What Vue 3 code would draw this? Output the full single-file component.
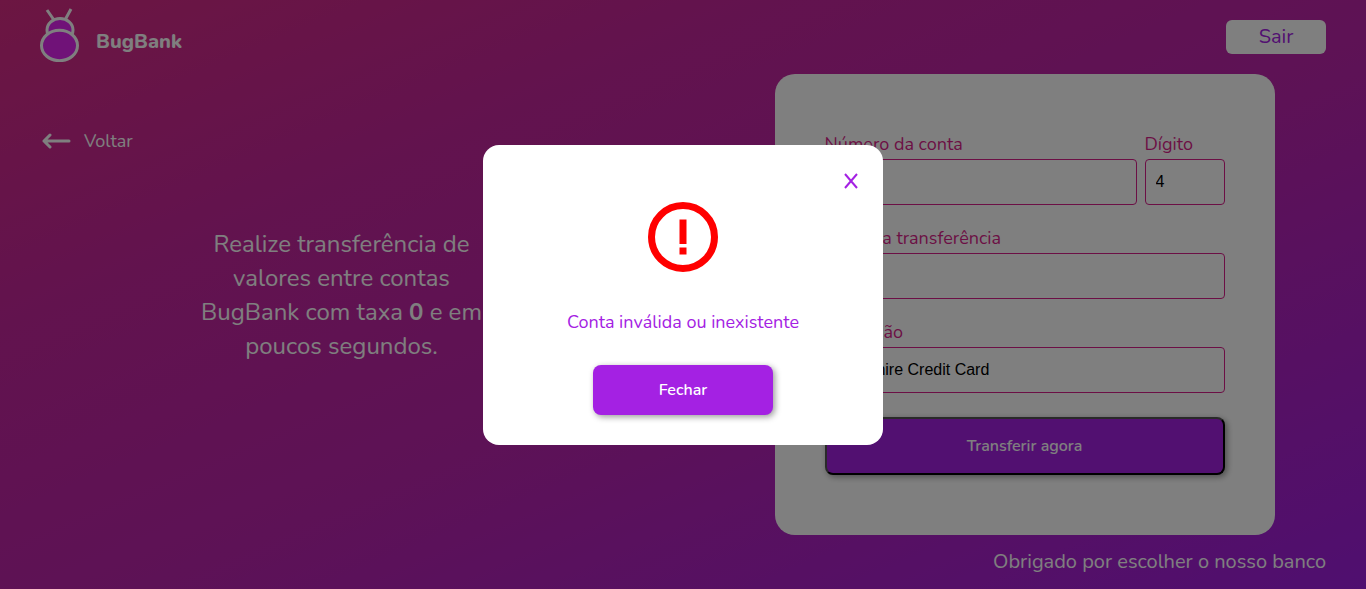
<script setup>
import { ref } from 'vue'

const account = ref('')
const digit = ref('4')
const amount = ref('')
const description = ref('Berkshire Credit Card')
</script>

<template>
  <div class="page">
    <header class="header">
      <a class="brand" href="#">
        <svg class="logo" viewBox="0 0 40 54" aria-hidden="true">
          <path d="M7 2 L14 12 M31 1 L25 12" fill="none" stroke="#fff" stroke-width="3" />
          <ellipse cx="20" cy="22" rx="13" ry="11.5" fill="#e024f0" stroke="#fff" stroke-width="3" />
          <ellipse cx="19.5" cy="37.5" rx="18" ry="15.2" fill="#e024f0" stroke="#fff" stroke-width="3" />
        </svg>
        <span>BugBank</span>
      </a>
      <button class="exit" type="button">Sair</button>
    </header>

    <main class="content">
      <section class="intro">
        <a class="back" href="#">
          <svg class="arrow" viewBox="0 0 30 16" aria-hidden="true">
            <path d="M8 2 L2 8 L8 14 M2 8 H27" />
          </svg>
          <span>Voltar</span>
        </a>
        <p class="pitch">
          Realize transferência de<br />valores entre contas<br />BugBank com taxa <strong>0</strong> e em<br />poucos segundos.
        </p>
      </section>

      <form class="card" @submit.prevent>
        <div class="row">
          <div class="field">
            <label for="account">Número da conta</label>
            <input id="account" v-model="account" type="text" />
          </div>
          <div class="field digit">
            <label for="digit">Dígito</label>
            <input id="digit" v-model="digit" type="text" />
          </div>
        </div>
        <div class="field">
          <label for="amount">Valor da transferência</label>
          <input id="amount" v-model="amount" type="text" />
        </div>
        <div class="field">
          <label for="description">Descrição</label>
          <input id="description" v-model="description" type="text" />
        </div>
        <button class="submit" type="submit">Transferir agora</button>
      </form>
    </main>

    <footer class="footer">Obrigado por escolher o nosso banco</footer>

    <div class="overlay">
      <div class="modal" role="dialog" aria-modal="true" aria-labelledby="modal-text">
        <a class="dismiss" href="#" aria-label="Fechar janela">
          <svg viewBox="0 0 15 17" aria-hidden="true"><path d="M2 1 L14 15 M14 1 L2 15" /></svg>
        </a>
        <svg class="alert" viewBox="0 0 70 70" aria-hidden="true">
          <circle cx="35" cy="35" r="31.5" fill="none" stroke="#f00" stroke-width="7" />
          <path d="M31.5 17.5 H38.5 V42 H31.5 Z M31.5 45.5 H38.5 V52.5 H31.5 Z" fill="#f00" />
        </svg>
        <p id="modal-text" class="message">Conta inválida ou inexistente</p>
        <button class="close" type="button">Fechar</button>
      </div>
    </div>
  </div>
</template>

<style>
body {
  margin: 0;
}
</style>

<style scoped>
.page,
.page * {
  box-sizing: border-box;
}

.page {
  display: flex;
  flex-direction: column;
  min-height: 100vh;
  overflow: hidden;
  background: linear-gradient(157deg, #d82c84 0%, #c5269d 28%, #bb24ac 55%, #9f1ee0 100%);
  color: #fff;
  font-family: Nunito, Lato, sans-serif;
}

a {
  color: inherit;
  text-decoration: none;
}

.header {
  display: flex;
  justify-content: space-between;
  align-items: flex-start;
  height: 74px;
  padding: 0 40px;
}

.brand {
  display: flex;
  gap: 16px;
  padding-top: 8px;
  font-size: 20px;
  font-weight: 800;
  line-height: 24px;
}

.brand span {
  margin-top: 22px;
}

.logo {
  width: 40px;
  height: 54px;
}

.exit {
  width: 100px;
  height: 34px;
  margin-top: 20px;
  padding: 0;
  border: 0;
  border-radius: 6px;
  background: #fff;
  color: #a421e3;
  font: 400 20px/32px Nunito, Lato, sans-serif;
}

.content {
  display: grid;
  grid-template-columns: 1fr 1fr;
}

.back {
  display: flex;
  align-items: center;
  gap: 12px;
  width: fit-content;
  margin: 55px 0 0 42px;
  font-size: 18px;
  line-height: 24px;
}

.arrow {
  width: 30px;
  height: 16px;
  fill: none;
  stroke: #fff;
  stroke-width: 3;
  stroke-linecap: round;
  stroke-linejoin: round;
}

.pitch {
  margin: 74px 0 0;
  font-size: 24px;
  line-height: 34px;
  text-align: center;
}

.pitch strong {
  font-weight: 700;
}

.card {
  display: flex;
  flex-direction: column;
  gap: 23px;
  width: 500px;
  margin: 0 auto;
  padding: 60px 50px 60px;
  border-radius: 20px;
  background: #fff;
}

.row {
  display: flex;
  gap: 8px;
}

.field {
  display: flex;
  flex: 1;
  flex-direction: column;
  min-width: 0;
}

.digit {
  flex: 0 0 80px;
}

.field label {
  color: #d91f8a;
  font-size: 18px;
  line-height: 20px;
  padding-bottom: 5px;
}

.field input {
  width: 100%;
  height: 46px;
  padding: 0 10px;
  border: 1px solid #d91f8a;
  border-radius: 4px;
  background: #fff;
  color: #000;
  font: 16px "Liberation Sans", Arial, sans-serif;
}

.submit,
.close {
  border-radius: 8px;
  background: #a421e3;
  box-shadow: 2px 2px 6px rgba(0, 0, 0, 0.4);
  color: #fff;
  font: 600 16px/20px Nunito, Lato, sans-serif;
}

.submit {
  height: 58px;
  margin-top: 1px;
  border: 2px outset #000;
}

.footer {
  margin: 14px 40px 0;
  font-size: 20px;
  line-height: 26px;
  text-align: right;
}

.overlay {
  position: fixed;
  inset: 0;
  display: flex;
  align-items: center;
  justify-content: center;
  background: rgba(0, 0, 0, 0.5);
}

.modal {
  display: flex;
  flex-direction: column;
  align-items: center;
  width: 400px;
  padding: 28px 25px 30px;
  border-radius: 16px;
  background: #fff;
  color: #a421e3;
}

.dismiss {
  align-self: flex-end;
  display: flex;
}

.dismiss svg {
  width: 15px;
  height: 17px;
  fill: none;
  stroke: #a421e3;
  stroke-width: 2;
}

.alert {
  width: 70px;
  height: 70px;
  margin-top: 12px;
}

.message {
  margin: 38px 0 30px;
  font-size: 18px;
  line-height: 25px;
}

.close {
  width: 180px;
  height: 50px;
  border: 0;
}
</style>
